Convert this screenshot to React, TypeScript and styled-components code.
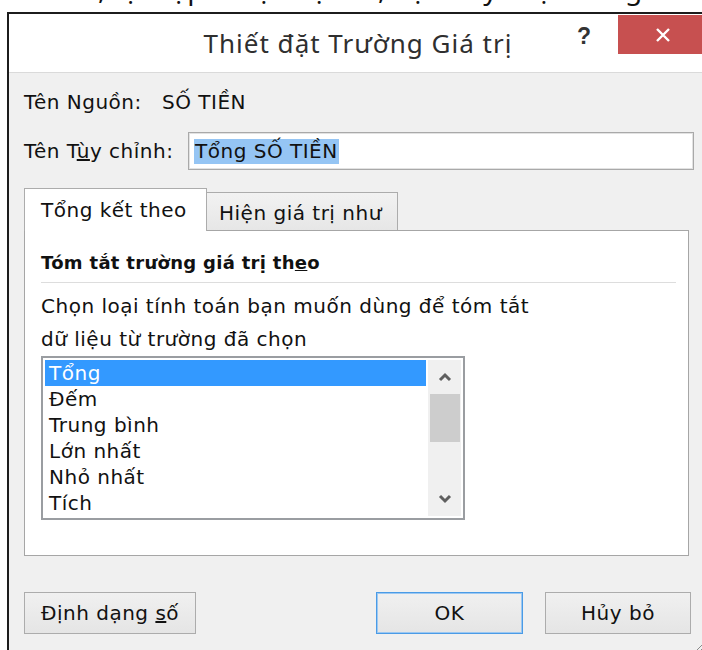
import React from "react";
import styled, { createGlobalStyle, css } from "styled-components";

const GlobalStyle = createGlobalStyle`
  html, body {
    margin: 0;
    padding: 0;
    background: #ffffff;
    overflow: hidden;
  }
  body {
    width: 702px;
    height: 650px;
    font-family: "DejaVu Sans", "Noto Sans", sans-serif;
    color: #111111;
  }
`;

const Page = styled.div`
  display: flex;
  flex-direction: column;
  width: 702px;
  height: 650px;
  overflow: hidden;
`;

/* Bottom of the article line that sits above the dialog */
const Snippet = styled.div`
  height: 12px;
  overflow: hidden;
  background: #ffffff;
  flex: none;
`;

const SnippetText = styled.p`
  margin: -26px 0 0 8px;
  font-family: "Noto Sans", sans-serif;
  font-size: 28px;
  line-height: 28px;
  white-space: nowrap;
  color: #111;
`;

const Dialog = styled.div`
  position: relative;
  flex: 1;
  width: 698px;
  margin-left: 7px;
  border-top: 2px solid #1c1c1c;
  border-left: 2px solid #1c1c1c;
  background: #f0f0f0;
  display: flex;
  flex-direction: column;
`;

const TitleBar = styled.div`
  height: 58px;
  flex: none;
  background: #ffffff;
  border-bottom: 1px solid #dadada;
  display: grid;
  grid-template-columns: 1fr auto 1fr;
  align-items: start;
`;

const Title = styled.div`
  grid-column: 2;
  padding-top: 12px;
  font-family: "Noto Sans", sans-serif;
  font-size: 26px;
  letter-spacing: 1px;
  line-height: 34px;
  color: #2f2f2f;
  white-space: nowrap;
`;

const Controls = styled.div`
  grid-column: 3;
  justify-self: end;
  display: flex;
  align-items: flex-start;
`;

const Help = styled.div`
  width: 24px;
  margin-right: 22px;
  padding-top: 9px;
  text-align: center;
  font-family: "Liberation Sans", Arial, sans-serif;
  font-weight: 700;
  font-size: 23px;
  line-height: 26px;
  color: #333;
`;

const CloseButton = styled.div`
  width: 89px;
  height: 39px;
  margin-top: 1px;
  background: #c75050;
  display: flex;
  align-items: center;
  justify-content: center;
`;

const Body = styled.div`
  flex: 1;
  display: flex;
  flex-direction: column;
  padding: 16px 13px 0 15px;
  font-size: 20px;
  letter-spacing: 0.5px;
`;

const FieldRow = styled.div<{ $gap?: number }>`
  display: flex;
  align-items: center;
  margin-bottom: ${(p) => p.$gap ?? 0}px;
`;

const Label = styled.span<{ $width: number }>`
  width: ${(p) => p.$width}px;
  flex: none;
  line-height: 26px;
  white-space: nowrap;
`;

const Value = styled.span`
  line-height: 26px;
  white-space: nowrap;
`;

const NameInput = styled.div`
  flex: 1;
  height: 38px;
  box-sizing: border-box;
  border: 1px solid #a9a9a9;
  box-shadow: inset 0 0 0 1px #e2e2e2;
  background: #ffffff;
  display: flex;
  align-items: center;
  padding-left: 5px;
`;

const Selection = styled.span`
  background: #95c5f4;
  line-height: 25px;
  padding: 0 1px;
  white-space: nowrap;
`;

const Tabs = styled.div`
  margin-top: 18px;
  margin-right: 5px;
  display: flex;
  flex-direction: column;
`;

const TabStrip = styled.div`
  display: flex;
  align-items: flex-end;
  height: 43px;
  margin-bottom: -1px;
`;

const Tab = styled.div<{ $active?: boolean }>`
  position: relative;
  box-sizing: border-box;
  border: 1px solid #acacac;
  border-bottom: none;
  white-space: nowrap;
  display: flex;
  align-items: center;
  ${(p) =>
    p.$active
      ? css`
          z-index: 2;
          width: 183px;
          height: 43px;
          padding-left: 16px;
          background: #ffffff;
        `
      : css`
          z-index: 0;
          width: 192px;
          height: 39px;
          margin-left: -1px;
          padding-left: 12px;
          padding-top: 2px;
          background: linear-gradient(#f2f2f2, #e6e6e6);
        `}
`;

const TabPanel = styled.div`
  position: relative;
  z-index: 1;
  height: 326px;
  box-sizing: border-box;
  border: 1px solid #a6a6a6;
  background: #ffffff;
  padding: 19px 12px 0 16px;
  display: flex;
  flex-direction: column;
`;

const SectionTitle = styled.div`
  font-weight: 700;
  font-size: 18px;
  letter-spacing: 0.3px;
  line-height: 26px;
  white-space: nowrap;
`;

const Divider = styled.div`
  height: 1px;
  background: #dddddd;
  margin-top: 6px;
`;

const Hint = styled.div`
  margin-top: 7px;
  line-height: 33px;
  white-space: nowrap;
`;

const ListBox = styled.div`
  width: 424px;
  height: 164px;
  box-sizing: border-box;
  border: 2px solid #9a9da1;
  padding: 2px;
  display: flex;
  background: #ffffff;
`;

const Items = styled.div`
  flex: 1;
  display: flex;
  flex-direction: column;
`;

const Item = styled.div<{ $selected?: boolean }>`
  height: 26px;
  line-height: 26px;
  padding-left: 4px;
  white-space: nowrap;
  ${(p) =>
    p.$selected &&
    css`
      background: #3399ff;
      color: #ffffff;
      margin-right: 2px;
    `}
`;

const ScrollBar = styled.div`
  width: 33px;
  background: #f0f0f0;
  display: flex;
  flex-direction: column;
  align-items: center;
`;

const Arrow = styled.div`
  height: 34px;
  width: 100%;
  display: flex;
  align-items: center;
  justify-content: center;
  flex: none;
`;

const Thumb = styled.div`
  width: 30px;
  height: 48px;
  background: #cdcdcd;
  flex: none;
`;

const Track = styled.div`
  flex: 1;
`;

const ButtonRow = styled.div`
  margin-top: 36px;
  padding-right: 3px;
  display: flex;
  align-items: center;
`;

const Button = styled.div<{ $width: number; $default?: boolean; $gap?: number }>`
  width: ${(p) => p.$width}px;
  height: 42px;
  box-sizing: border-box;
  margin-left: ${(p) => p.$gap ?? 0}px;
  border: 1px solid ${(p) => (p.$default ? "#4a9be6" : "#acacac")};
  box-shadow: ${(p) => (p.$default ? "inset 0 0 0 1px #9cc8f2" : "none")};
  background: linear-gradient(#f0f0f0, #e5e5e5);
  display: flex;
  align-items: center;
  justify-content: center;
  white-space: nowrap;
`;

const Spacer = styled.div`
  flex: 1;
`;

const Grip = styled.svg`
  position: absolute;
  right: -3px;
  bottom: 0;
`;

const Chevron = ({ up }: { up?: boolean }) => (
  <svg width="14" height="10" viewBox="0 0 14 10">
    <path
      d={up ? "M2 8 L7 3 L12 8" : "M2 2 L7 7 L12 2"}
      fill="none"
      stroke="#5f5f5f"
      strokeWidth="3"
    />
  </svg>
);

const functions = ["Tổng", "Đếm", "Trung bình", "Lớn nhất", "Nhỏ nhất", "Tích"];

export default function App() {
  return (
    <>
      <GlobalStyle />
      <Page>
        <Snippet>
          <SnippetText>Sau đó, tại hộp thoại hiện ra, bạn hãy chọn Tổng rồi nhấn nút OK để hoàn tất.</SnippetText>
        </Snippet>
        <Dialog>
          <TitleBar>
            <Title>Thiết đặt Trường Giá trị</Title>
            <Controls>
              <Help>?</Help>
              <CloseButton>
                <svg width="16" height="14" viewBox="0 0 16 14">
                  <path d="M2 1 L14 13 M14 1 L2 13" stroke="#ffffff" strokeWidth="2.4" />
                </svg>
              </CloseButton>
            </Controls>
          </TitleBar>
          <Body>
            <FieldRow $gap={17}>
              <Label $width={138}>Tên Nguồn:</Label>
              <Value>SỐ TIỀN</Value>
            </FieldRow>
            <FieldRow>
              <Label $width={164}>
                Tên T<u>ù</u>y chỉnh:
              </Label>
              <NameInput>
                <Selection>Tổng SỐ TIỀN</Selection>
              </NameInput>
            </FieldRow>
            <Tabs>
              <TabStrip>
                <Tab $active>Tổng kết theo</Tab>
                <Tab>Hiện giá trị như</Tab>
              </TabStrip>
              <TabPanel>
                <SectionTitle>
                  Tóm tắt trường giá trị th<u>e</u>o
                </SectionTitle>
                <Divider />
                <Hint>
                  Chọn loại tính toán bạn muốn dùng để tóm tắt
                  <br />
                  dữ liệu từ trường đã chọn
                </Hint>
                <ListBox>
                  <Items>
                    {functions.map((f, i) => (
                      <Item key={f} $selected={i === 0}>
                        {f}
                      </Item>
                    ))}
                  </Items>
                  <ScrollBar>
                    <Arrow>
                      <Chevron up />
                    </Arrow>
                    <Thumb />
                    <Track />
                    <Arrow>
                      <Chevron />
                    </Arrow>
                  </ScrollBar>
                </ListBox>
              </TabPanel>
            </Tabs>
            <ButtonRow>
              <Button $width={172}>
                <span>
                  Định dạng <u>s</u>ố
                </span>
              </Button>
              <Spacer />
              <Button $width={147} $default>
                OK
              </Button>
              <Button $width={146} $gap={22}>
                Hủy bỏ
              </Button>
            </ButtonRow>
          </Body>
          <Grip width="16" height="14" viewBox="0 0 16 14">
            <path d="M15 2 L3 14 M15 6 L7 14 M15 10 L11 14" stroke="#8a8a8a" strokeWidth="1" />
          </Grip>
        </Dialog>
      </Page>
    </>
  );
}
